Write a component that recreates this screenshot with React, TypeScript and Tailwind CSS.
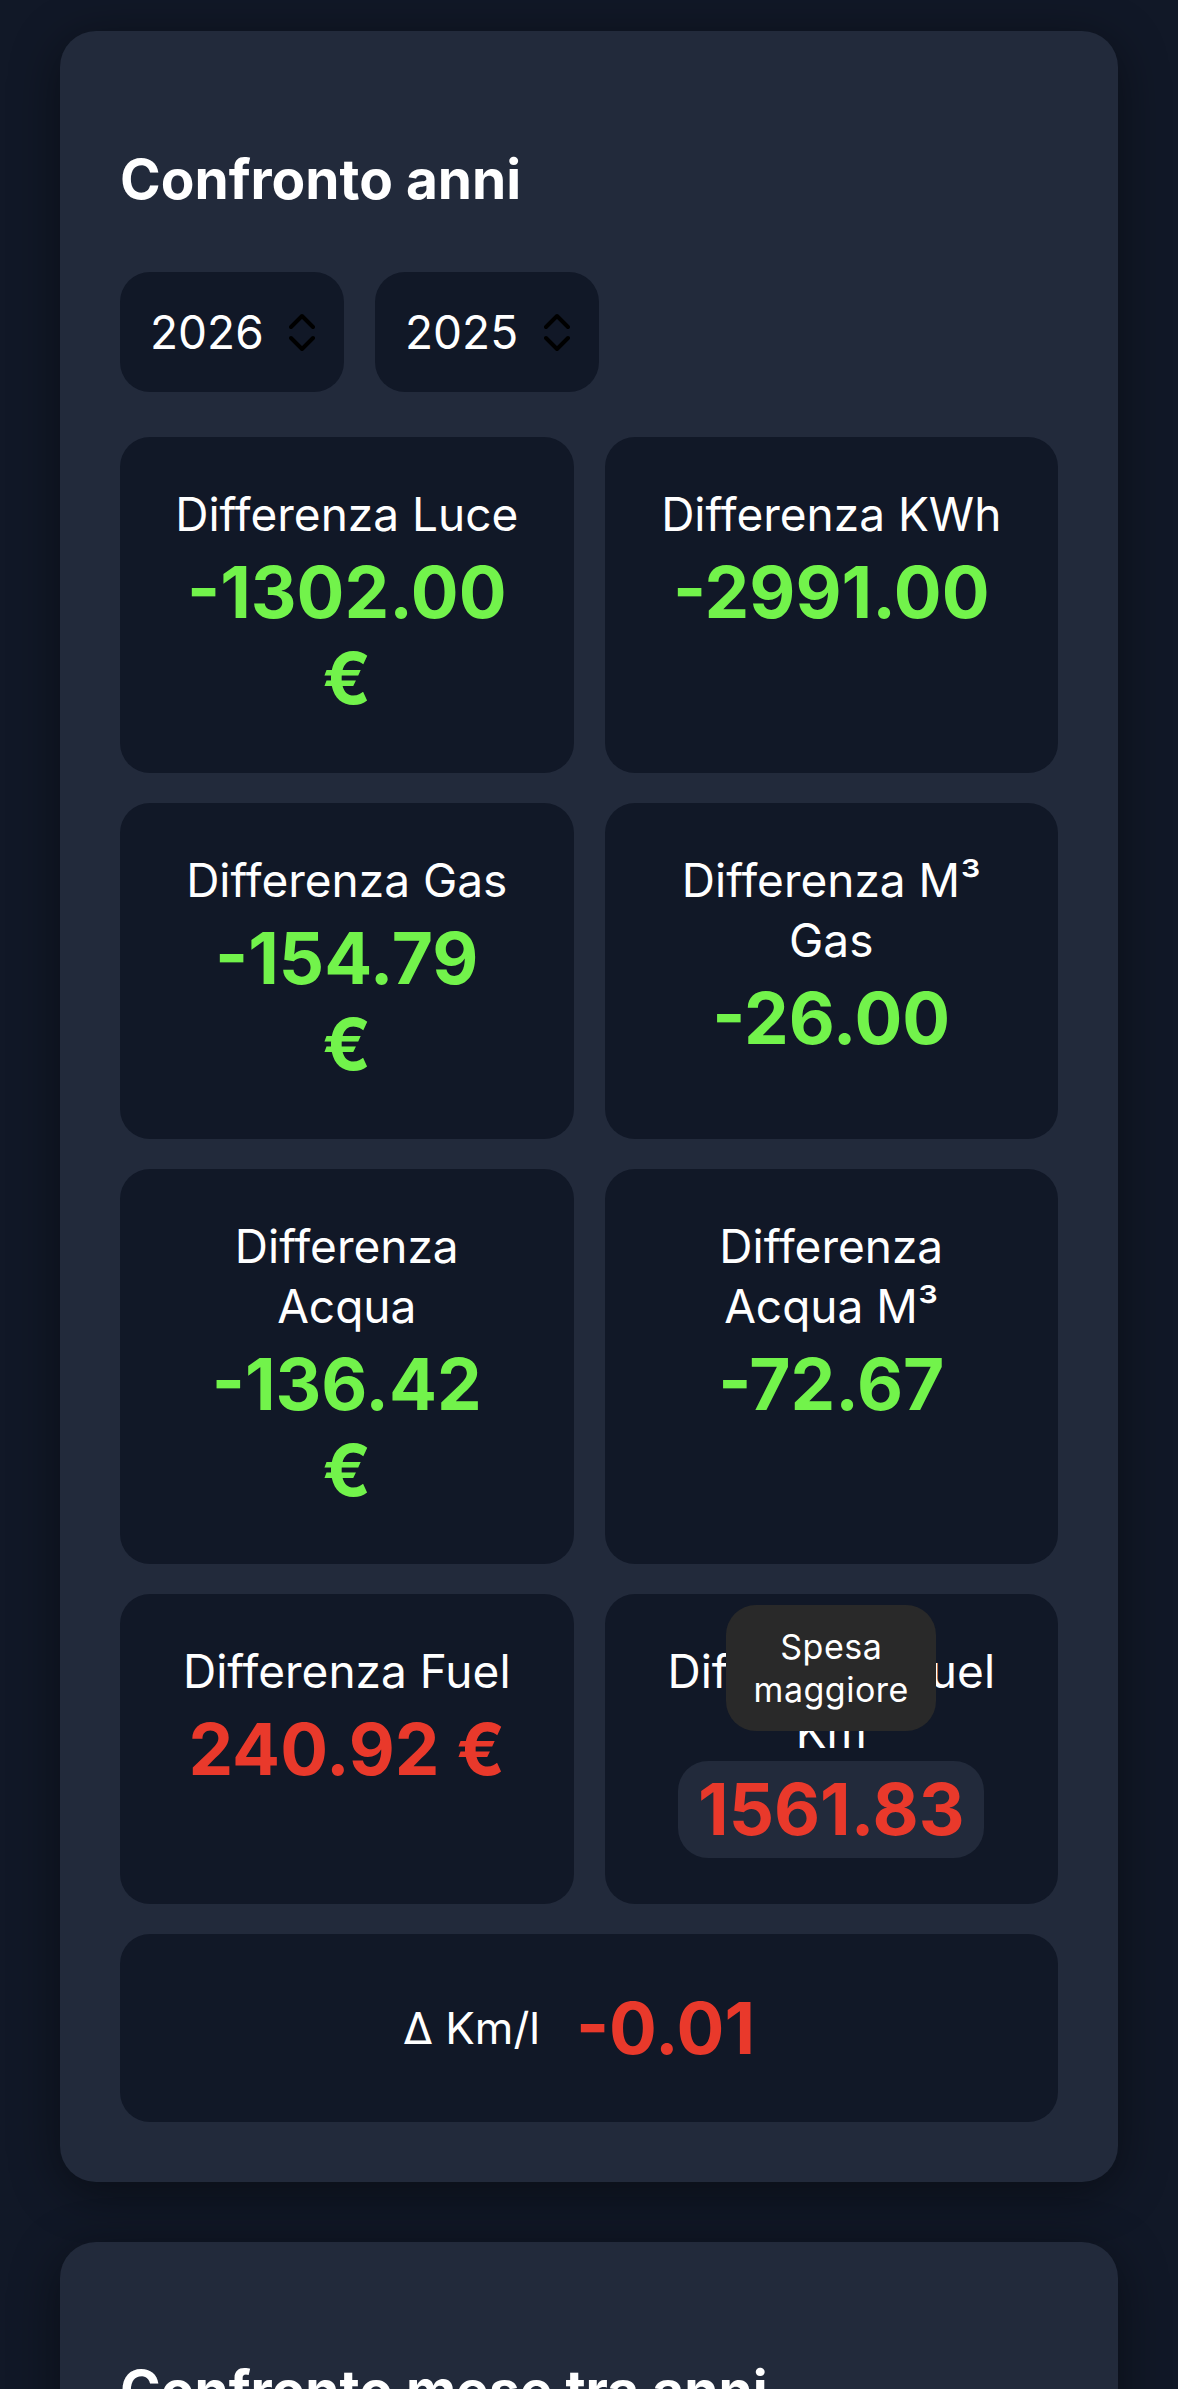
import React from "react";

type Tile = {
  label: string[];
  value: string[];
  color: "green" | "red";
  tooltip?: string[];
};

const tiles: Tile[] = [
  { label: ["Differenza Luce"], value: ["-1302.00", "€"], color: "green" },
  { label: ["Differenza KWh"], value: ["-2991.00"], color: "green" },
  { label: ["Differenza Gas"], value: ["-154.79", "€"], color: "green" },
  { label: ["Differenza M³", "Gas"], value: ["-26.00"], color: "green" },
  { label: ["Differenza", "Acqua"], value: ["-136.42", "€"], color: "green" },
  { label: ["Differenza", "Acqua M³"], value: ["-72.67"], color: "green" },
  { label: ["Differenza Fuel"], value: ["240.92 €"], color: "red" },
  {
    label: ["Differenza Fuel", "Km"],
    value: ["1561.83"],
    color: "red",
    tooltip: ["Spesa", "maggiore"],
  },
];

function Chevrons() {
  return (
    <svg width="26" height="41" viewBox="0 0 26 41" fill="none">
      <path d="M2 15 L13 4 L24 15" stroke="#000" strokeWidth="4" strokeLinecap="round" strokeLinejoin="round" />
      <path d="M2 26 L13 37 L24 26" stroke="#000" strokeWidth="4" strokeLinecap="round" strokeLinejoin="round" />
    </svg>
  );
}

function YearSelect({ year }: { year: string }) {
  return (
    <div className="flex h-[120px] w-[224px] items-center justify-between rounded-[30px] bg-[#111827] pl-[30px] pr-[29px]">
      <span className="text-[46px] leading-[56px] text-white">{year}</span>
      <Chevrons />
    </div>
  );
}

function Value({ lines, color, tooltip }: { lines: string[]; color: "green" | "red"; tooltip?: string[] }) {
  const colorCls = color === "green" ? "text-[#72f34b]" : "text-[#e9392b]";
  return (
    <div
      className={`relative inline-block rounded-[30px] px-[20px] py-[5px] text-[71px] font-bold leading-[86.4px] ${colorCls} ${
        tooltip ? "bg-[#222a3b]" : ""
      }`}
    >
      {lines.map((l, i) => (
        <span key={i} className="block whitespace-nowrap">
          {l}
        </span>
      ))}
      {tooltip && (
        <div className="absolute bottom-[calc(100%+30px)] left-1/2 w-[210px] -translate-x-1/2 rounded-[30px] bg-[#292929] py-[20px] text-center text-[34px] font-normal leading-[43px] tracking-[0.5px] text-white">
          {tooltip.map((t, i) => (
            <span key={i} className="block">
              {t}
            </span>
          ))}
        </div>
      )}
    </div>
  );
}

function TileCard({ t }: { t: Tile }) {
  return (
    <div className="flex flex-col items-center rounded-[30px] bg-[#111827] px-[20px] pb-[46px] pt-[47px] text-center">
      <div className="text-[46px] leading-[60px] text-white">
        {t.label.map((l, i) => (
          <span key={i} className="block whitespace-nowrap">
            {l}
          </span>
        ))}
      </div>
      <Value lines={t.value} color={t.color} tooltip={t.tooltip} />
    </div>
  );
}

export default function App() {
  return (
    <div
      className="h-[2389px] overflow-hidden bg-[#111827] px-[60px] pt-[31px]"
      style={{ fontFamily: "Inter, 'Noto Sans', sans-serif" }}
    >
      <section className="rounded-[36px] bg-[#222a3b] px-[60px] pb-[60px] pt-[115px] shadow-[0_10px_50px_rgba(0,0,0,0.45)]">
        <h2 className="text-[55px] font-bold leading-[66px] text-white">Confronto anni</h2>
        <div className="mt-[60px] flex gap-[31px]">
          <YearSelect year="2026" />
          <YearSelect year="2025" />
        </div>
        <div className="mt-[45px] grid grid-cols-2 gap-x-[31px] gap-y-[30px]">
          {tiles.map((t, i) => (
            <TileCard key={i} t={t} />
          ))}
        </div>
        <div className="mt-[30px] flex items-center justify-center gap-[16px] rounded-[30px] bg-[#111827] py-[46px]">
          <span className="text-[44px] leading-[52px] text-white">Δ Km/l</span>
          <Value lines={["-0.01"]} color="red" />
        </div>
      </section>

      <section className="mt-[60px] rounded-[36px] bg-[#222a3b] px-[60px] pb-[60px] pt-[115px] shadow-[0_10px_50px_rgba(0,0,0,0.45)]">
        <h2 className="text-[55px] font-bold leading-[66px] text-white">Confronto mese tra anni</h2>
        <div className="mt-[60px] flex gap-[31px]">
          <YearSelect year="2026" />
          <YearSelect year="2025" />
        </div>
      </section>
    </div>
  );
}
